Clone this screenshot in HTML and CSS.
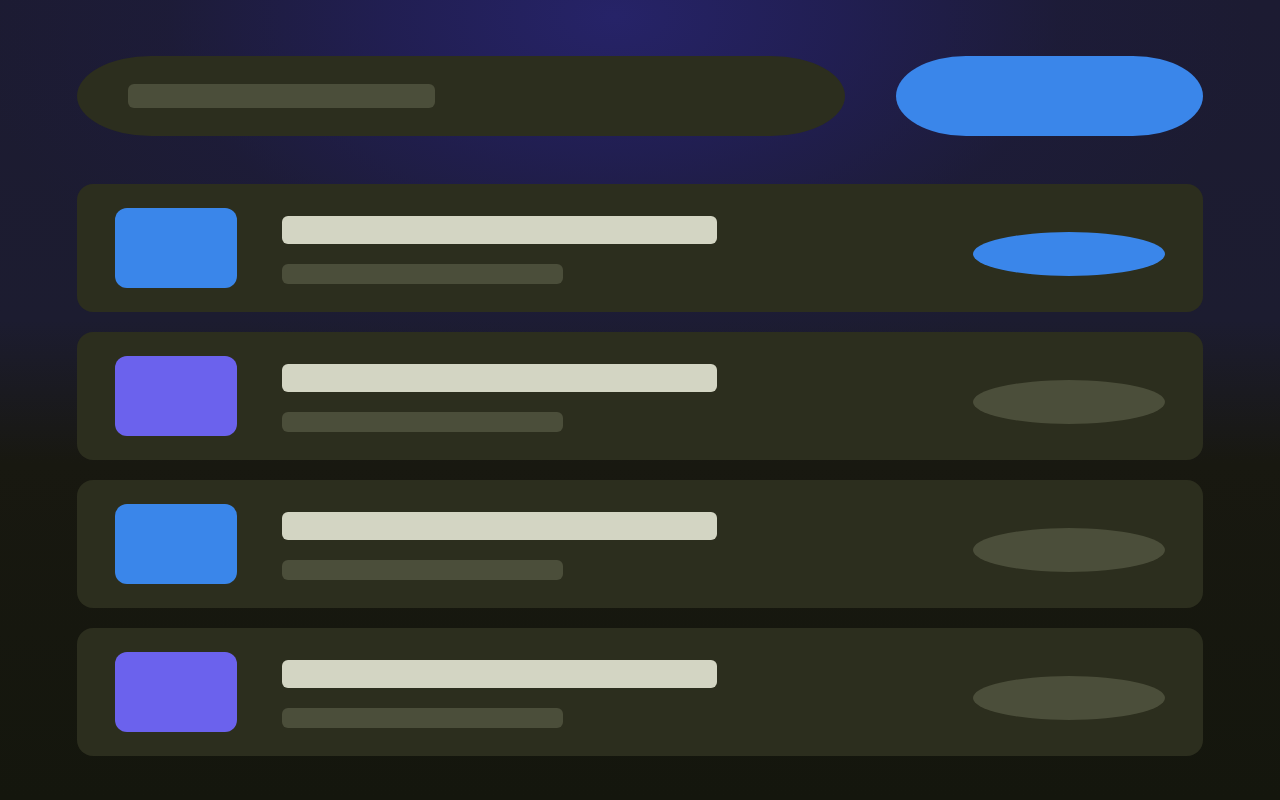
FILE: index.html
```html
<!DOCTYPE html>
<html lang="en">
<head>
<meta charset="utf-8">
<title>List</title>
<link rel="stylesheet" href="styles.css">
</head>
<body>
<div class="page">
  <header class="header">
    <div class="search"><div class="search-bar"></div></div>
    <div class="cta"></div>
  </header>
  <main class="list">
    <div class="card">
      <div class="thumb blue"></div>
      <div class="text"><div class="title"></div><div class="sub"></div></div>
      <div class="pill active"></div>
    </div>
    <div class="card">
      <div class="thumb violet"></div>
      <div class="text"><div class="title"></div><div class="sub"></div></div>
      <div class="pill"></div>
    </div>
    <div class="card">
      <div class="thumb blue"></div>
      <div class="text"><div class="title"></div><div class="sub"></div></div>
      <div class="pill"></div>
    </div>
    <div class="card">
      <div class="thumb violet"></div>
      <div class="text"><div class="title"></div><div class="sub"></div></div>
      <div class="pill"></div>
    </div>
  </main>
</div>
</body>
</html>
```
FILE: styles.css
```css
html, body {
  margin: 0;
  padding: 0;
  height: 100%;
}
body {
  font-family: "Liberation Sans", Arial, sans-serif;
  background:
    radial-gradient(ellipse 640px 380px at 48% 2%, rgba(38,35,104,1) 0%, rgba(34,31,88,0.85) 35%, rgba(30,28,64,0.4) 70%, rgba(30,28,64,0) 100%),
    linear-gradient(180deg, #1c1b32 0%, #1c1c30 40%, #181810 58%, #14160d 100%);
  min-height: 800px;
}
.page {
  padding: 56px 77px 0 77px;
}
.header {
  display: flex;
  gap: 51px;
  height: 80px;
}
.search {
  flex: 1;
  background: #2c2e1e;
  border-radius: 74px / 40px;
  display: flex;
  align-items: center;
  padding-left: 51px;
}
.search-bar {
  width: 307px;
  height: 24px;
  border-radius: 6px;
  background: #4b4e3a;
}
.cta {
  width: 307px;
  background: #3a86ea;
  border-radius: 70px / 40px;
}
.list {
  margin-top: 48px;
  display: flex;
  flex-direction: column;
  gap: 20px;
}
.card {
  display: flex;
  align-items: flex-start;
  height: 80px;
  padding: 24px 38px;
  background: #2c2e1e;
  border-radius: 16px;
}
.thumb {
  width: 122px;
  height: 80px;
  border-radius: 12px;
  flex: none;
}
.thumb.blue { background: #3a86ea; }
.thumb.violet { background: #6b62ed; }
.text {
  margin-left: 45px;
  margin-top: 8px;
  display: flex;
  flex-direction: column;
  gap: 20px;
  flex: 1;
}
.title {
  width: 435px;
  height: 28px;
  border-radius: 6px;
  background: #d3d5c3;
}
.sub {
  width: 281px;
  height: 20px;
  border-radius: 6px;
  background: #4b4e3a;
}
.pill {
  width: 192px;
  height: 44px;
  margin-top: 24px;
  border-radius: 50%;
  background: #4b4e3a;
  flex: none;
}
.pill.active { background: #3a86ea; }
```
